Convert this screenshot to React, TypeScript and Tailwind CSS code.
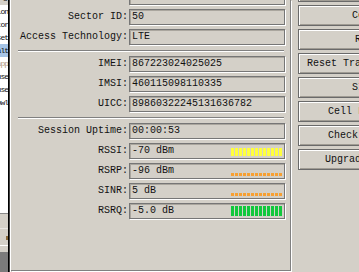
const MONO = "font-['Liberation_Mono','DejaVu_Sans_Mono',monospace]";

type Row =
  | { kind: "sep" }
  | { kind: "field"; label: string; value: string; bars?: { color: string; h: number } };

const ROWS: Row[] = [
  { kind: "field", label: "", value: "" },
  { kind: "field", label: "Sector ID:", value: "50" },
  { kind: "field", label: "Access Technology:", value: "LTE" },
  { kind: "sep" },
  { kind: "field", label: "IMEI:", value: "867223024025025" },
  { kind: "field", label: "IMSI:", value: "460115098110335" },
  { kind: "field", label: "UICC:", value: "89860322245131636782" },
  { kind: "sep" },
  { kind: "field", label: "Session Uptime:", value: "00:00:53" },
  { kind: "field", label: "RSSI:", value: "-70 dBm", bars: { color: "bg-[#ffff3c]", h: 8 } },
  { kind: "field", label: "RSRP:", value: "-96 dBm", bars: { color: "bg-[#f7a032]", h: 3 } },
  { kind: "field", label: "SINR:", value: "5 dB", bars: { color: "bg-[#f7a032]", h: 3 } },
  { kind: "field", label: "RSRQ:", value: "-5.0 dB", bars: { color: "bg-[#10c83c]", h: 10 } },
];

const BUTTONS = [
  "Disconnect",
  "Connect",
  "Reboot",
  "Reset Traffic Counters",
  "SIM PIN",
  "Cell Lock Setup",
  "Check Neighbors",
  "Upgrade Firmware",
];

const LIST = [
  { text: "ion", hl: false },
  { text: "tor", hl: false },
  { text: "set", hl: false },
  { text: "alt", hl: true },
  { text: "app", hl: false, faded: true },
  { text: "use", hl: false },
  { text: "use", hl: false },
  { text: "owl", hl: false },
];

function SignalBars({ color, h }: { color: string; h: number }) {
  return (
    <div className="ml-auto mr-[2px] mb-[2px] flex items-end gap-[1px] self-end">
      {Array.from({ length: 13 }).map((_, i) => (
        <div key={i} className={`w-[3px] ${color}`} style={{ height: h }} />
      ))}
    </div>
  );
}

export default function App() {
  return (
    <div
      className={`flex h-[272px] w-[359px] overflow-hidden bg-[#d4d0c8] text-[10px] leading-[16px] text-[#111] ${MONO}`}
    >
      {/* list strip on the far left */}
      <div className="flex w-[8px] shrink-0 flex-col">
        <div className="flex h-[5px] justify-end overflow-hidden bg-[#d4d0c8] text-[9px] leading-[5px]">
          <span className="-mt-[3px]">e</span>
        </div>
        <div className="flex h-[208px] flex-col bg-white">
          {LIST.map((r, i) => (
            <div
              key={i}
              className={`flex h-[13px] items-center justify-end overflow-hidden whitespace-nowrap text-[8px] tracking-[-1px] ${
                r.hl ? "bg-[#a6c4e6]" : ""
              } ${r.faded ? "text-[#b49a7e]" : ""}`}
            >
              {r.text}
            </div>
          ))}
        </div>
        <div className="h-[1px] bg-[#8a8a8a]" />
        <div className="h-[14px] bg-[#d4d0c8]" />
        <div className="h-[1px] bg-[#e8e6e2]" />
        <div className="relative h-[16px] bg-[#d4d0c8]">
          <div className="absolute right-0 top-[7px] h-[4px] w-[2px] bg-[#8a6a3a]" />
        </div>
        <div className="h-[1px] bg-white" />
        <div className="h-[6px] bg-[#d4d0c8]" />
        <div className="flex-1 bg-[#7b7b7b]" />
      </div>

      {/* frame edge */}
      <div className="w-[1px] shrink-0 bg-black" />
      <div className="w-[1px] shrink-0 bg-[#404040]" />
      <div className="w-[1px] shrink-0 bg-white" />

      {/* info panel */}
      <div className="flex h-[271px] w-[280px] shrink-0 flex-col border-b border-r border-[#808080] shadow-[1px_1px_0_#fff]">
        <div className="-mt-[11px] flex flex-col gap-[4px]">
          {ROWS.map((r, i) =>
            r.kind === "sep" ? (
              <div key={i} className="ml-[7px] mt-[1px] w-[266px]">
                <div className="h-[1px] bg-[#808080]" />
                <div className="h-[1px] bg-white" />
              </div>
            ) : (
              <div key={i} className="flex h-[16px] items-center gap-[1px]">
                <div className="w-[117px] shrink-0 whitespace-nowrap text-right">{r.label}</div>
                <div className="flex h-[16px] w-[156px] shrink-0 border border-[#767676] shadow-[1px_1px_0_#fff,inset_1px_1px_0_#aaa69e]">
                  <span className="whitespace-nowrap pl-[2px] leading-[14px]">{r.value}</span>
                  {r.bars && <SignalBars color={r.bars.color} h={r.bars.h} />}
                </div>
              </div>
            )
          )}
        </div>
      </div>

      {/* command buttons */}
      <div className="-mt-[19px] ml-[7px] flex flex-col gap-[3px]">
        {BUTTONS.map((b) => (
          <button
            key={b}
            className="flex h-[21px] w-[150px] shrink-0 items-center justify-center whitespace-nowrap border border-[#6a6a6a] bg-[#d4d0c8] shadow-[inset_1px_1px_0_#fff,inset_-1px_-1px_0_#a09c94]"
          >
            {b}
          </button>
        ))}
      </div>
    </div>
  );
}
